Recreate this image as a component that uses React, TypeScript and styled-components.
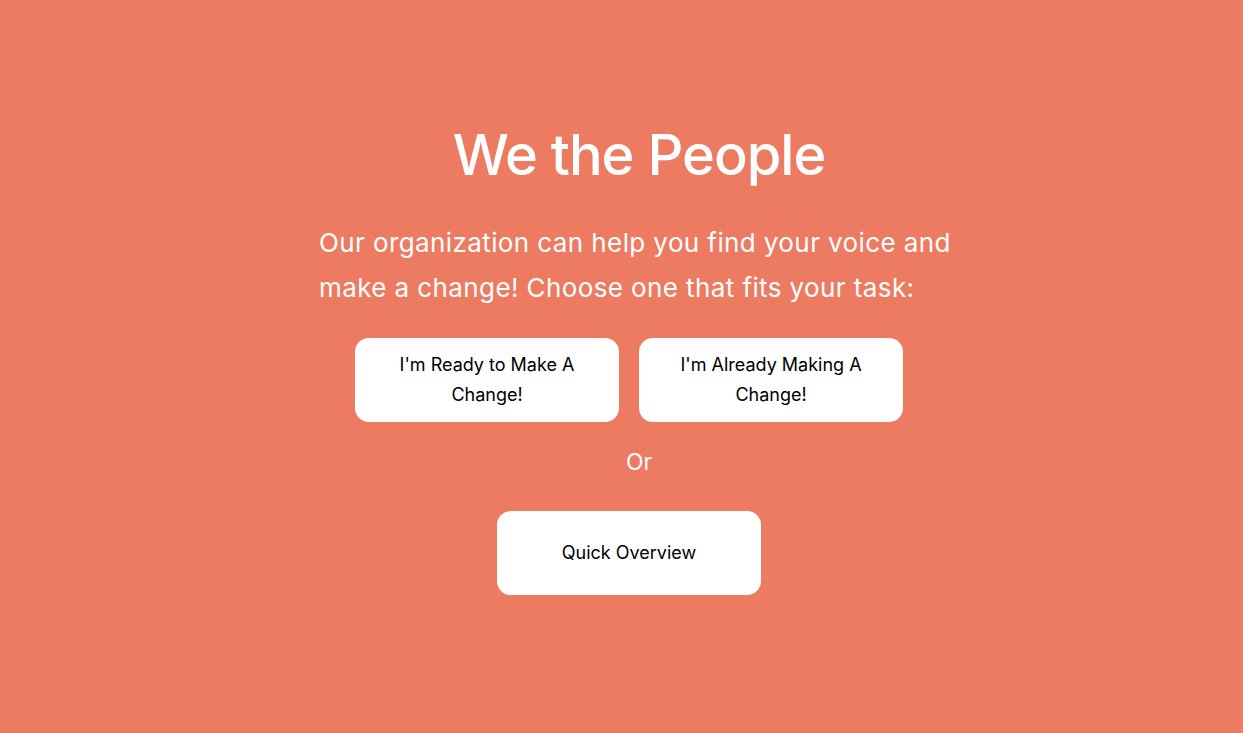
import React from 'react';
import styled, { createGlobalStyle } from 'styled-components';

const GlobalStyle = createGlobalStyle`
  html, body {
    margin: 0;
    padding: 0;
    background-color: #ec7b62;
  }
  body {
    font-family: Inter, "Noto Sans", sans-serif;
  }
`;

const Page = styled.main`
  min-height: 733px;
  box-sizing: border-box;
  padding: 118px 0 0 35px;
  display: flex;
  flex-direction: column;
  align-items: center;
  color: #fff;
`;

const Title = styled.h1`
  margin: 0;
  font-size: 56px;
  font-weight: 500;
  line-height: 74px;
  letter-spacing: -1px;
`;

const Intro = styled.p`
  width: 640px;
  margin: 28px 0 0;
  font-size: 26px;
  line-height: 45px;
  font-weight: 400;
  letter-spacing: 0.4px;
`;

const ButtonRow = styled.div`
  display: flex;
  margin-top: 28px;
`;

const ChoiceButton = styled.button`
  width: 264px;
  height: 84px;
  margin-right: 20px;
  padding: 0 40px;
  border: none;
  border-radius: 14px;
  background: #fff;
  color: #000;
  font-family: inherit;
  font-size: 18px;
  line-height: 30px;
  cursor: pointer;
`;

const Divider = styled.div`
  margin-top: 24px;
  font-size: 23px;
  line-height: 32px;
`;

const OverviewRow = styled.div`
  display: flex;
  margin-top: 33px;
`;

export default function App() {
  return (
    <>
      <GlobalStyle />
      <Page>
        <Title>We the People</Title>
        <Intro>
          Our organization can help you find your voice and make a change! Choose one that fits your task:
        </Intro>
        <ButtonRow>
          <ChoiceButton>I'm Ready to Make A Change!</ChoiceButton>
          <ChoiceButton>I'm Already Making A Change!</ChoiceButton>
        </ButtonRow>
        <Divider>Or</Divider>
        <OverviewRow>
          <ChoiceButton>Quick Overview</ChoiceButton>
        </OverviewRow>
      </Page>
    </>
  );
}
